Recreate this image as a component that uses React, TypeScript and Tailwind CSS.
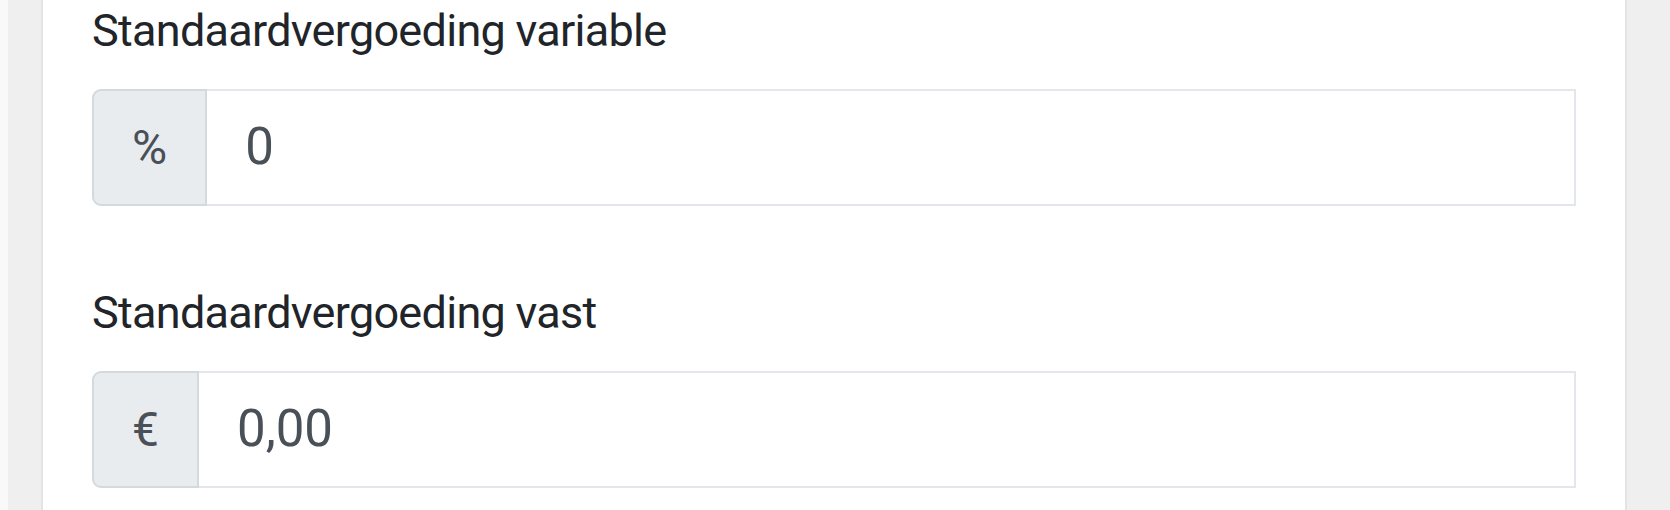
import * as React from 'react'

// Simple prefixed input group, bootstrap-like
function PrefixedField({ label, prefix, value }: { label: string; prefix: string; value: string }) {
  return (
    <div>
      <div className="flex h-[60px] items-center text-[45px] leading-none tracking-[-0.72px] text-[#212529]">{label}</div>
      <div className="mt-[29px] flex h-[117px]">
        <div className="flex items-center rounded-l-[9px] border-2 border-[#d4d9de] bg-[#e9ecef] px-[38px] text-[48px] text-[#495057]">
          {prefix}
        </div>
        <div className="flex flex-1 items-center border-2 border-l-0 border-[#e3e6ea] bg-white px-[38px] text-[51px] text-[#495057]">
          {value}
        </div>
      </div>
    </div>
  )
}

export default function App() {
  return (
    <div className="flex h-[510px] w-[1670px] overflow-hidden bg-[#efefef] font-['Roboto',sans-serif]">
      <div className="w-[8px] bg-[#f9f9f9]" />
      <div className="w-[33px]" />
      <div className="flex-1 border-x-2 border-[#e4e4e4] bg-white pl-[49px] pr-[49px]">
        <PrefixedField label="Standaardvergoeding variable" prefix="%" value="0" />
        <div className="mt-[76px]">
          <PrefixedField label="Standaardvergoeding vast" prefix="€" value="0,00" />
        </div>
      </div>
      <div className="w-[43px]" />
    </div>
  )
}
